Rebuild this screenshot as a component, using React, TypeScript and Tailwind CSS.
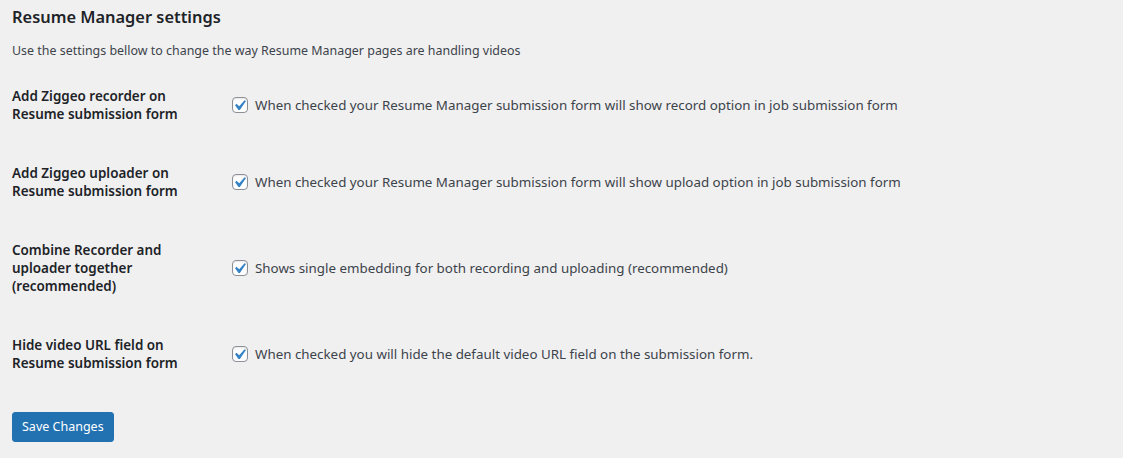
import React from "react";

const rows: { label: string[]; text: string }[] = [
  {
    label: ["Add Ziggeo recorder on", "Resume submission form"],
    text: "When checked your Resume Manager submission form will show record option in job submission form",
  },
  {
    label: ["Add Ziggeo uploader on", "Resume submission form"],
    text: "When checked your Resume Manager submission form will show upload option in job submission form",
  },
  {
    label: ["Combine Recorder and", "uploader together", "(recommended)"],
    text: "Shows single embedding for both recording and uploading (recommended)",
  },
  {
    label: ["Hide video URL field on", "Resume submission form"],
    text: "When checked you will hide the default video URL field on the submission form.",
  },
];

function Check() {
  return (
    <span className="relative inline-block w-4 h-4 shrink-0 rounded-[4px] border border-[#8c8f94] bg-white mr-[7px] shadow-[inset_0_1px_2px_rgba(0,0,0,0.1)]">
      <svg viewBox="0 0 20 20" className="absolute left-[-4px] top-[-3px] w-[21px] h-[21px]">
        <path d="M14.83 4.89l1.34.94-5.81 8.38H9.02L5.78 9.67l1.34-1.25 2.57 2.4z" fill="#3582c4" />
      </svg>
    </span>
  );
}

export default function App() {
  return (
    <div
      className="min-h-[458px] w-full bg-[#f0f0f1] pl-[12px] text-[#3c434a]"
      style={{ fontFamily: '"Noto Sans", "Open Sans", sans-serif' }}
    >
      <h2 className="pt-[6px] text-[16.4px] leading-[22px] font-semibold text-[#1d2327]">
        Resume Manager settings
      </h2>
      <p className="mt-[13px] text-[12.45px] leading-[20px]">
        Use the settings bellow to change the way Resume Manager pages are handling videos
      </p>
      <div className="mt-[6px] flex flex-col">
        {rows.map((r, i) => (
          <div key={i} className="flex items-center">
            <div className="w-[210px] shrink-0 py-5 pr-[10px] text-[13.45px] leading-[18.4px] font-semibold text-[#1d2327]">
              {r.label.map((l, j) => (
                <div key={j}>{l}</div>
              ))}
            </div>
            <label className="flex items-center px-[10px] text-[13.35px] leading-[18px] text-[#3c434a]">
              <Check />
              <span>{r.text}</span>
            </label>
          </div>
        ))}
      </div>
      <div className="mt-[19px]">
        <button className="h-[30px] rounded-[3px] border border-[#2271b1] bg-[#2271b1] px-[9px] text-[12.5px] leading-[28px] text-white">
          Save Changes
        </button>
      </div>
    </div>
  );
}
